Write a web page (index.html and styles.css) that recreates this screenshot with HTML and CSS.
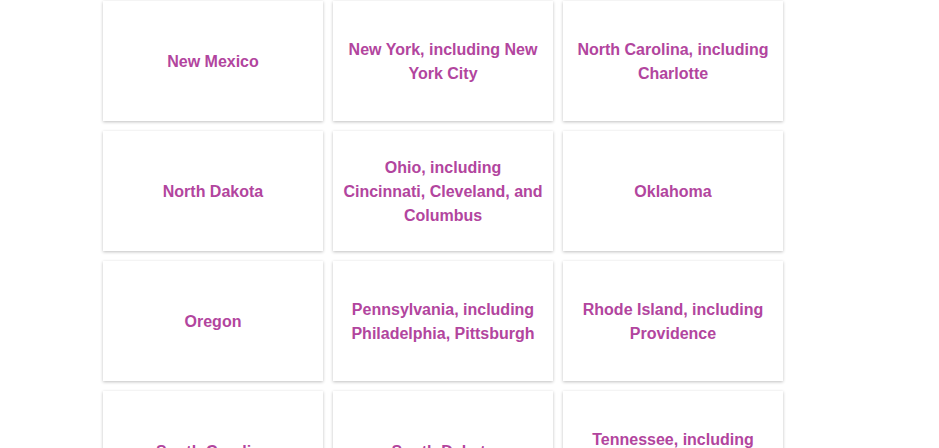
FILE: index.html
```html
<!DOCTYPE html>
<html lang="en">
<head>
<meta charset="utf-8">
<title>States</title>
<link rel="stylesheet" href="styles.css">
</head>
<body>
<div class="grid">
  <div class="card">New Mexico</div>
  <div class="card">New York, including New York City</div>
  <div class="card">North Carolina, including Charlotte</div>
  <div class="card">North Dakota</div>
  <div class="card">Ohio, including Cincinnati, Cleveland, and Columbus</div>
  <div class="card">Oklahoma</div>
  <div class="card">Oregon</div>
  <div class="card">Pennsylvania, including Philadelphia, Pittsburgh</div>
  <div class="card">Rhode Island, including Providence</div>
  <div class="card">South Carolina</div>
  <div class="card">South Dakota</div>
  <div class="card">Tennessee, including Nashville</div>
</div>
</body>
</html>
```
FILE: styles.css
```css
html, body {
  margin: 0;
  background: #ffffff;
}
body {
  padding: 1px 0 0 103px;
  font-family: "Liberation Sans", Arial, sans-serif;
}
.grid {
  display: grid;
  grid-template-columns: repeat(3, 220px);
  grid-auto-rows: 120px;
  gap: 10px;
}
.card {
  display: flex;
  align-items: center;
  justify-content: center;
  text-align: center;
  padding: 2px 10px 0;
  background: #ffffff;
  box-shadow: 0 1px 3px rgba(0, 0, 0, 0.25);
  color: #b2459e;
  font-weight: bold;
  font-size: 16px;
  line-height: 24px;
}
```
